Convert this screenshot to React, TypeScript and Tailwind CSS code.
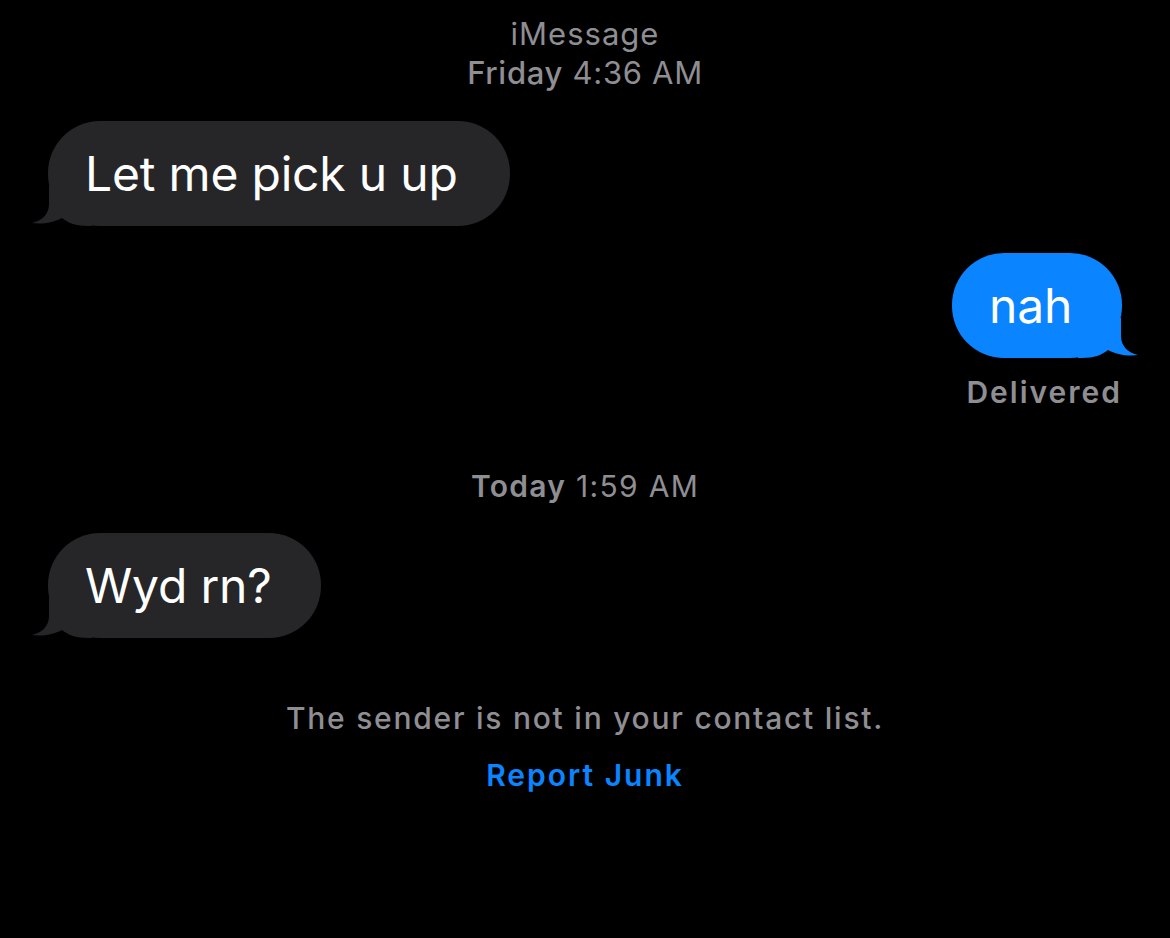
import React from "react";

const font = { fontFamily: "Inter, 'Noto Sans', sans-serif" };

function Tail({ color, side }: { color: string; side: "left" | "right" }) {
  return (
    <svg
      width="60"
      height="40"
      viewBox="0 0 60 40"
      className={
        side === "left"
          ? "absolute left-[-16px] bottom-0"
          : "absolute right-[-16px] bottom-0 -scale-x-100"
      }
    >
      <path
        d="M17 0 L17 18 C17 29 9 35 0 37 C10 38.5 22 36.5 30 32 C36 37 44 40 56 40 L60 40 L60 0 Z"
        fill={color}
      />
    </svg>
  );
}

function Bubble({
  text,
  width,
  sent,
}: {
  text: string;
  width: number;
  sent?: boolean;
}) {
  const color = sent ? "#0a84ff" : "#262629";
  return (
    <div
      className={`relative h-[105px] rounded-[52px] flex items-center pl-[37px] ${
        sent ? "bg-[#0a84ff]" : "bg-[#262629]"
      }`}
      style={{ width }}
    >
      <Tail color={color} side={sent ? "right" : "left"} />
      <span className="relative text-white text-[48px] leading-none tracking-[-0.2px]">
        {text}
      </span>
    </div>
  );
}

export default function App() {
  return (
    <div
      className="w-[1170px] h-[938px] bg-black overflow-hidden flex flex-col"
      style={font}
    >
      <div className="pt-[14px] flex flex-col items-center text-[#8e8e93] text-[31px] leading-[39px]">
        <div className="tracking-[1px]">iMessage</div>
        <div className="tracking-[0.7px]">
          <span className="font-medium">Friday</span> 4:36 AM
        </div>
      </div>

      <div className="mt-[29px] pl-[48px]">
        <Bubble text="Let me pick u up" width={462} />
      </div>

      <div className="mt-[27px] flex flex-col items-end pr-[48px]">
        <Bubble text="nah" width={170} sent />
        <div className="mt-[16px] text-[30px] leading-[36px] font-semibold text-[#8e8e93] tracking-[2px]">
          Delivered
        </div>
      </div>

      <div className="mt-[58px] text-center text-[30px] leading-[36px] text-[#8e8e93] tracking-[1.3px]">
        <span className="font-semibold">Today</span> 1:59 AM
      </div>

      <div className="mt-[29px] pl-[48px]">
        <Bubble text="Wyd rn?" width={273} />
      </div>

      <div className="mt-[62px] flex flex-col items-center text-[30px] leading-[36px] font-medium">
        <div className="text-[#8e8e93] tracking-[1.75px]">The sender is not in your contact list.</div>
        <div className="mt-[21px] text-[#0a84ff] font-semibold tracking-[2px]">Report Junk</div>
      </div>
    </div>
  );
}
